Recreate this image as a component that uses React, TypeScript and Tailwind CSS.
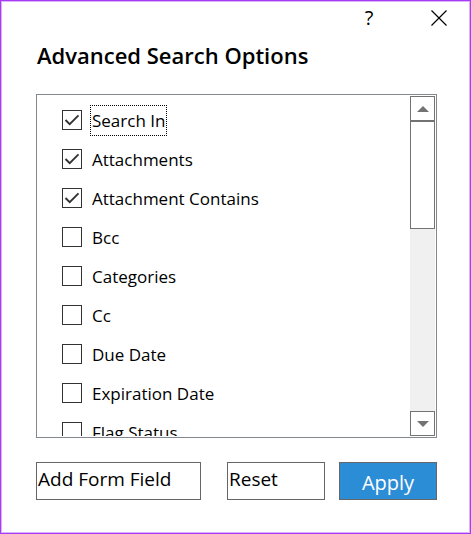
import { useRef, useState } from 'react';

const FIELDS = [
  'Search In',
  'Attachments',
  'Attachment Contains',
  'Bcc',
  'Categories',
  'Cc',
  'Due Date',
  'Expiration Date',
  'Flag Status',
];

const DEFAULT_CHECKED = ['Search In', 'Attachments', 'Attachment Contains'];

interface FieldRowProps {
  label: string;
  checked: boolean;
  focused: boolean;
  onToggle: () => void;
}

function FieldRow({ label, checked, focused, onToggle }: FieldRowProps) {
  return (
    <li className="h-[39px]">
      <label className="flex items-start">
        <span className="mt-[5px] grid shrink-0">
          <input
            type="checkbox"
            checked={checked}
            onChange={onToggle}
            className="col-start-1 row-start-1 size-5 appearance-none border border-[#333333] bg-white outline-none"
          />
          {checked && (
            <svg viewBox="0 0 20 20" className="pointer-events-none col-start-1 row-start-1 size-5" fill="none" stroke="#333333" strokeWidth="1.9">
              <path d="M3.5 10l4.2 4.2 8.8-8.8" />
            </svg>
          )}
        </span>
        <span
          className={`ml-2 h-[31px] border border-dotted px-px text-[17px] leading-[29px] whitespace-nowrap ${
            focused ? 'border-black' : 'border-transparent'
          }`}
        >
          {label}
        </span>
      </label>
    </li>
  );
}

export default function App() {
  const [checked, setChecked] = useState<string[]>(DEFAULT_CHECKED);
  const [focused, setFocused] = useState('Search In');
  const listRef = useRef<HTMLUListElement | null>(null);

  const toggle = (field: string) => {
    setFocused(field);
    setChecked((prev) => (prev.includes(field) ? prev.filter((f) => f !== field) : [...prev, field]));
  };

  const scrollBy = (amount: number) => listRef.current?.scrollBy({ top: amount });

  return (
    <div
      role="dialog"
      aria-labelledby="dialog-title"
      className="flex h-screen flex-col border border-[#a63cf5] bg-white pr-[33px] pb-[33px] pl-[35px] font-['Open_Sans','Noto_Sans',sans-serif] text-black inset-ring inset-ring-[#dcb0fc]"
    >
      <div className="-mr-3.5 flex h-[33px] shrink-0 justify-end gap-[46px]">
        <button aria-label="Help" className="w-6 text-[20px] leading-[33px]">
          ?
        </button>
        <button aria-label="Close" className="flex w-6 items-center justify-center">
          <svg viewBox="0 0 16 16" className="size-4" fill="none" stroke="black" strokeWidth="1.2">
            <path d="M.5.5l15 15M15.5.5l-15 15" />
          </svg>
        </button>
      </div>

      <h1 id="dialog-title" className="mb-[18px] h-[42px] shrink-0 pl-px text-[22px] leading-[42px] font-semibold whitespace-nowrap">
        Advanced Search Options
      </h1>

      <div className="flex min-h-0 flex-1 border border-[#828790] p-px">
        <ul ref={listRef} className="min-w-0 flex-1 overflow-y-auto pt-[9px] pl-6 [scrollbar-width:none]">
          {FIELDS.map((field) => (
            <FieldRow
              key={field}
              label={field}
              checked={checked.includes(field)}
              focused={focused === field}
              onToggle={() => toggle(field)}
            />
          ))}
        </ul>
        <div className="flex w-[25px] flex-col bg-[#f0f0f0]">
          <button
            aria-label="Scroll up"
            onClick={() => scrollBy(-39)}
            className="flex h-[25px] shrink-0 items-center justify-center border border-[#737373] bg-white"
          >
            <svg viewBox="0 0 12 6" className="h-1.5 w-3" fill="#737373">
              <path d="M6 0l6 6H0z" />
            </svg>
          </button>
          <div className="h-[108px] border border-[#737373] bg-white" />
          <button
            aria-label="Scroll down"
            onClick={() => scrollBy(39)}
            className="mt-auto flex h-[25px] shrink-0 items-center justify-center border border-[#737373] bg-white"
          >
            <svg viewBox="0 0 12 6" className="h-1.5 w-3" fill="#737373">
              <path d="M0 0h12L6 6z" />
            </svg>
          </button>
        </div>
      </div>

      <div className="mt-6 grid h-[38px] shrink-0 grid-cols-[177fr_98fr_98fr] gap-[14px]">
        <button className="mr-3 border border-[#666666] px-px pb-1 text-left text-[19px] leading-[32px] whitespace-nowrap">
          Add Form Field
        </button>
        <button className="border border-[#666666] px-px pb-1 text-left text-[19px] leading-[32px] whitespace-nowrap">
          Reset
        </button>
        <button className="border border-[#666666] bg-[#2b8dd6] pt-1 text-[20px] leading-[32px] text-white">
          Apply
        </button>
      </div>
    </div>
  );
}
